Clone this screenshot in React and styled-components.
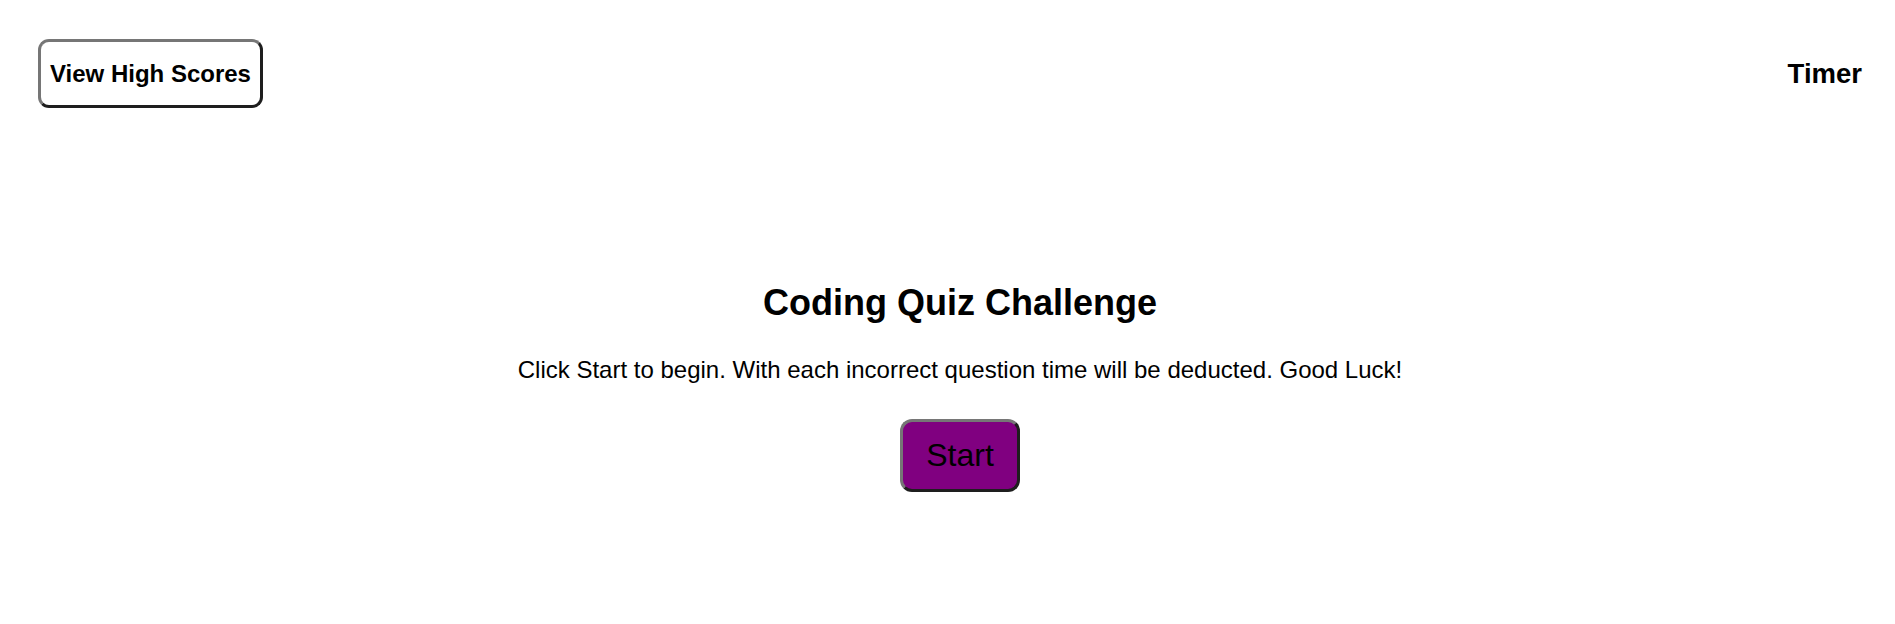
import React from "react";
import styled, { createGlobalStyle } from "styled-components";

const GlobalStyle = createGlobalStyle`
  html, body {
    margin: 0;
    padding: 0;
    background: #ffffff;
    font-family: "Liberation Sans", Arial, sans-serif;
    color: #000000;
  }
`;

const Page = styled.div`
  width: 100%;
  min-height: 624px;
`;

const Header = styled.header`
  display: flex;
  align-items: center;
  justify-content: space-between;
  padding: 39px 33px 0 38px;
`;

const ScoresButton = styled.button`
  font-family: "Liberation Sans", Arial, sans-serif;
  font-size: 24px;
  font-weight: bold;
  color: #000;
  background: #ffffff;
  padding: 18px 9px;
  line-height: 27px;
  border: 3px solid;
  border-color: #767676 #1e1e1e #1e1e1e #767676;
  border-radius: 11px;
  cursor: pointer;
`;

const Timer = styled.div`
  font-size: 27.5px;
  font-weight: bold;
  line-height: 32px;
`;

const Main = styled.main`
  display: flex;
  flex-direction: column;
  align-items: center;
  padding-top: 174px;
  padding-left: 25px;
`;

const Title = styled.h1`
  margin: 0;
  font-size: 36px;
  line-height: 41px;
  font-weight: bold;
`;

const Intro = styled.p`
  margin: 33px 0 0;
  font-size: 24px;
  line-height: 28px;
`;

const StartButton = styled.button`
  margin-top: 35px;
  font-family: "Liberation Sans", Arial, sans-serif;
  font-size: 32px;
  line-height: 37px;
  color: #000;
  background: #800080;
  padding: 15px 23px;
  border: 3px solid;
  border-color: #767676 #1e1e1e #1e1e1e #767676;
  border-radius: 12px;
  cursor: pointer;
`;

export default function App() {
  return (
    <Page>
      <GlobalStyle />
      <Header>
        <ScoresButton>View High Scores</ScoresButton>
        <Timer>Timer</Timer>
      </Header>
      <Main>
        <Title>Coding Quiz Challenge</Title>
        <Intro>
          Click Start to begin. With each incorrect question time will be deducted. Good Luck!
        </Intro>
        <StartButton>Start</StartButton>
      </Main>
    </Page>
  );
}
